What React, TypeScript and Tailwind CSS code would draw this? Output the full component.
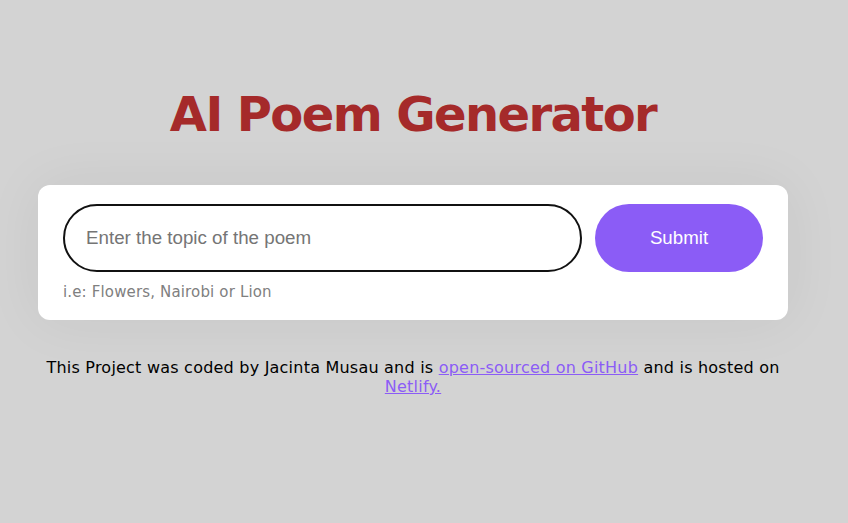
export default function App() {
  return (
    <div className="min-h-[523px] w-full bg-[#d3d3d3]">
      <div className="w-[826px] flex flex-col items-center pt-[84px]">
        <h1 className="text-[48px] leading-[60px] font-bold tracking-[-1.6px] text-[#a52a2a] font-['DejaVu_Sans',sans-serif]">
          AI Poem Generator
        </h1>

        <form
          onSubmit={(e) => e.preventDefault()}
          className="mt-[41px] w-[750px] h-[135px] bg-white rounded-xl px-[25px] pt-[19px] shadow-[0_0_60px_rgba(0,0,0,0.06)]"
        >
          <div className="flex gap-[13px]">
            <input
              type="text"
              placeholder="Enter the topic of the poem"
              className="w-[519px] h-[68px] rounded-full border-2 border-[#111] px-[21px] text-[18.75px] text-black placeholder:text-[#757575] font-['Liberation_Sans',Arial,sans-serif] outline-none"
            />
            <button
              type="submit"
              className="w-[168px] h-[68px] rounded-full bg-[#8b5cf6] text-white text-[18.7px] font-['Liberation_Sans',Arial,sans-serif]"
            >
              Submit
            </button>
          </div>
          <p className="mt-[9px] text-[15px] tracking-[0.15px] text-[#808080] font-['DejaVu_Sans',sans-serif]">
            i.e: Flowers, Nairobi or Lion
          </p>
        </form>

        <footer className="mt-[38px] w-[750px] text-center text-[16px] leading-[19px] tracking-[0.22px] text-black font-['DejaVu_Sans',sans-serif]">
          This Project was coded by Jacinta Musau and is{" "}
          <a href="#" className="text-[#8b5cf6] underline">
            open-sourced on GitHub
          </a>{" "}
          and is hosted on{" "}
          <a href="#" className="text-[#8b5cf6] underline">
            Netlify.
          </a>
        </footer>
      </div>
    </div>
  );
}
